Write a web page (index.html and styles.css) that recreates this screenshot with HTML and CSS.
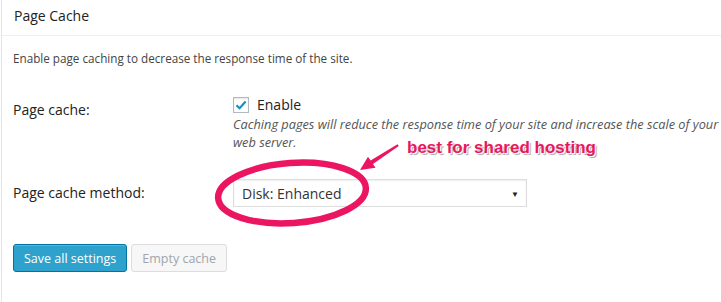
FILE: index.html
```html
<!DOCTYPE html>
<html>
<head>
  <title>Page Cache</title>
  <link rel="stylesheet" href="styles.css">
</head>
<body>
  <div class="postbox">
    <h3 class="postbox-title">Page Cache</h3>

    <div class="inside">
      <p class="description">Enable page caching to decrease the response time of the site.</p>

      <div class="form-table">
        <div class="row row-cache">
          <div class="th">Page cache:</div>
          <div class="td">
            <label class="check-label">
              <span class="checkbox">
                <svg width="12" height="10" viewBox="0 0 12 10"><path d="M1.5 5.2 L4.6 8.2 L10.6 1.6" fill="none" stroke="#1e8cbe" stroke-width="2.2"/></svg>
              </span>
              Enable
            </label>
            <p class="hint">Caching pages will reduce the response time of your site and increase the scale of your <br>web server.</p>
          </div>
        </div>

        <div class="row row-method">
          <div class="th">Page cache method:</div>
          <div class="td">
            <div class="select">
              <span>Disk: Enhanced</span>
              <span class="caret">&#9660;</span>
            </div>
          </div>
        </div>
      </div>

      <div class="buttons">
        <button class="button-primary">Save all settings</button>
        <button class="button" disabled>Empty cache</button>
      </div>
    </div>

    <!-- red annotation drawn on top of the screenshot -->
    <svg class="annotation" width="400" height="100" viewBox="0 0 400 100">
      <ellipse cx="80" cy="50" rx="74" ry="30" fill="none" stroke="#ec1561" stroke-width="6.5" transform="rotate(-4 80 50)"/>
      <path d="M185.5 1.2 L186.8 3 L161 21 L163.5 24.8 L148 27 L156 13.8 L158.6 17.6 Z" fill="#ec1561"/>
    </svg>
    <div class="note">best for shared hosting</div>
  </div>
</body>
</html>
```

FILE: styles.css
```css
* {
  margin: 0;
  padding: 0;
  box-sizing: border-box;
}

body {
  background: #fff;
  color: #444;
  font-family: 'Open Sans', sans-serif;
  font-size: 13px;
  width: 721px;
  height: 302px;
  overflow: hidden;
}

.postbox {
  position: relative;
  height: 302px;
  border-left: 1px solid #e5e5e5;
  margin-left: 1px;
}

.postbox-title {
  font-size: 14px;
  font-weight: 400;
  color: #222;
  line-height: 19px;
  padding: 6px 12px 10px 12px;
  border-bottom: 1px solid #eee;
}

.inside {
  padding: 0 11px;
}

.description {
  margin-top: 12px;
  font-size: 11.7px;
  line-height: 20px;
}

.form-table {
  margin-top: 27px;
  display: flex;
  flex-direction: column;
}

.row {
  display: flex;
  color: #222;
}

.th {
  width: 220px;
  flex-shrink: 0;
  font-size: 14px;
  line-height: 20px;
}

.row-cache .th {
  padding-top: 5px;
}

.check-label {
  display: flex;
  align-items: center;
  gap: 8px;
  font-size: 14px;
  line-height: 20px;
}

.checkbox {
  width: 16px;
  height: 16px;
  border: 1px solid #b4b9be;
  background: #fff;
  box-shadow: inset 0 1px 2px rgba(0, 0, 0, 0.1);
  display: flex;
  align-items: center;
  justify-content: center;
}

.hint {
  font-style: italic;
  font-size: 12.75px;
  line-height: 18px;
  color: #555;
  white-space: nowrap;
}

.row-method {
  margin-top: 28px;
  align-items: center;
}

.select {
  width: 294px;
  height: 28px;
  border: 1px solid #ddd;
  box-shadow: inset 0 1px 2px rgba(0, 0, 0, 0.07);
  display: flex;
  align-items: center;
  justify-content: space-between;
  padding: 0 7px 0 8px;
  font-size: 14px;
  color: #333;
}

.caret {
  font-size: 8px;
  color: #222;
}

.buttons {
  margin-top: 37px;
  display: flex;
  gap: 4px;
}

.buttons button {
  height: 28px;
  padding: 0 10px;
  border-radius: 3px;
  font-family: 'Open Sans', sans-serif;
  font-size: 12.5px;
}

.button-primary {
  background: #2ea2cc;
  border: 1px solid #0074a2;
  color: #fff;
  box-shadow: inset 0 1px 0 rgba(120, 200, 230, 0.5);
}

.button {
  background: #f7f7f7;
  border: 1px solid #ddd;
  color: #a0a5aa;
}

.annotation {
  position: absolute;
  left: 210px;
  top: 143px;
}

.note {
  position: absolute;
  left: 405px;
  top: 138px;
  font-family: 'Liberation Sans', Arial, sans-serif;
  font-weight: 700;
  font-size: 17px;
  color: #e8185e;
  text-shadow: 1px 1px 0 #fff, 2px 2px 1px rgba(0, 0, 0, 0.35);
}
```
